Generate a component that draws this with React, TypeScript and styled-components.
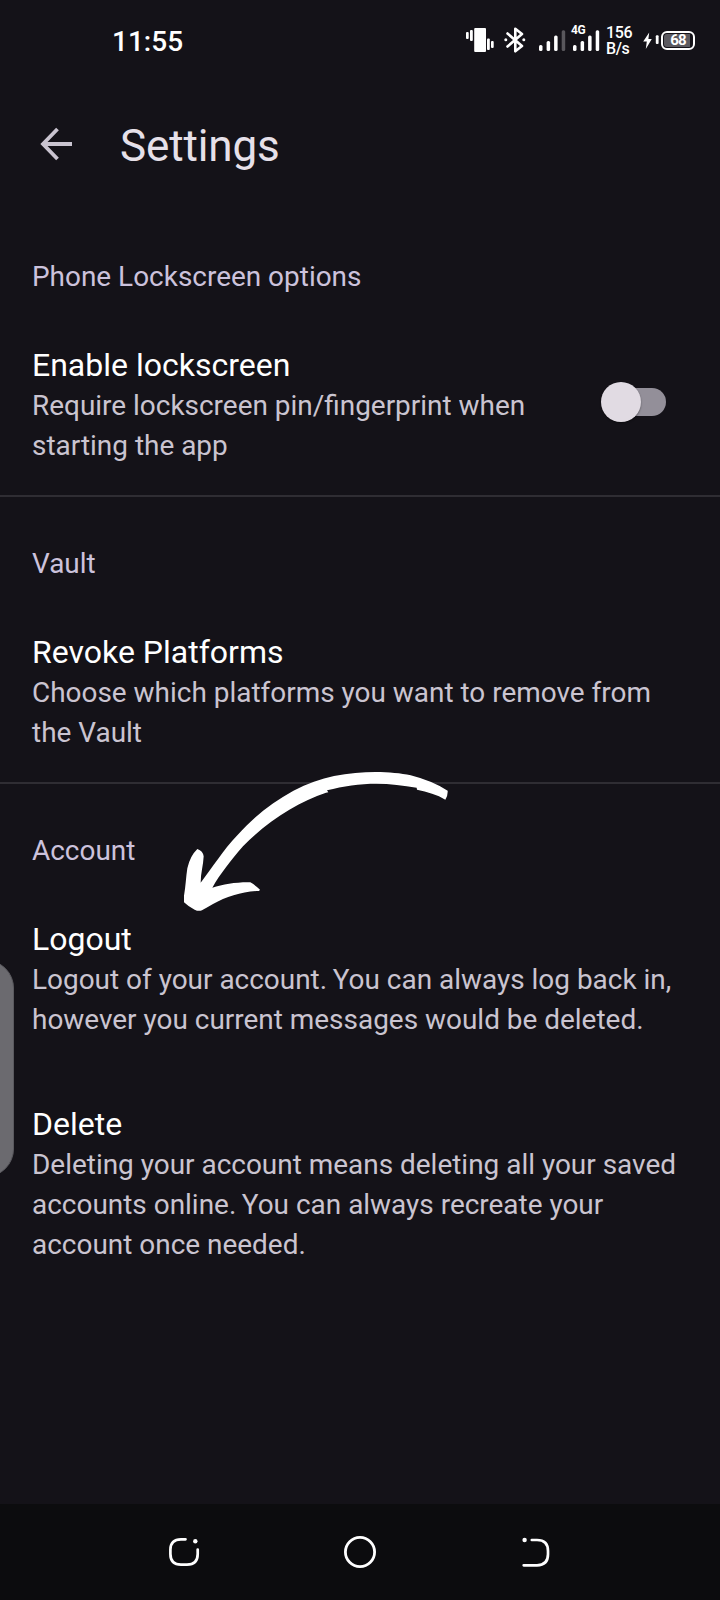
import React from "react";
import styled, { createGlobalStyle } from "styled-components";

const GlobalStyle = createGlobalStyle`
  * { box-sizing: border-box; }
  html, body { margin: 0; padding: 0; background: #141218; }
  body {
    font-family: Roboto, "Liberation Sans", sans-serif;
    text-rendering: optimizeLegibility;
  }
  h1, h2, h3, p { margin: 0; font-weight: 400; }
  svg { flex: none; }
`;

const Screen = styled.div`
  position: relative;
  display: flex;
  flex-direction: column;
  width: 720px;
  height: 1600px;
  overflow: hidden;
  background: #141218;
`;

const StatusBar = styled.header`
  display: flex;
  align-items: center;
  justify-content: space-between;
  height: 80px;
  padding: 0 25px 0 112px;
  color: #fff;
`;

const Clock = styled.span`
  font-size: 28px;
  font-weight: 500;
  line-height: 32px;
  padding-top: 4px;
`;

const StatusIcons = styled.div`
  display: flex;
  align-items: center;
  width: 229px;
  height: 60px;
`;

const NetworkSpeed = styled.div`
  display: flex;
  flex-direction: column;
  width: 37px;
  padding-top: 2px;
  font-size: 16px;
  font-weight: 500;
  line-height: 16px;
  letter-spacing: -0.4px;
`;

const SignalWrap = styled.div`
  position: relative;
  display: flex;
  margin: 0 6px 0 7px;
`;

const SignalLabel = styled.span`
  position: absolute;
  left: -2px;
  top: 13px;
  font-size: 12px;
  line-height: 14px;
  font-weight: 700;
  letter-spacing: -0.4px;
`;

const Battery = styled.div`
  display: flex;
  flex: none;
  align-items: center;
  justify-content: center;
  width: 34px;
  height: 19px;
  border: 2px solid #fff;
  border-radius: 6px;
  background: linear-gradient(90deg, #5c5a60 26px, transparent 26px) content-box;
  padding: 1px;
  font-size: 15px;
  line-height: 15px;
  font-weight: 700;
  letter-spacing: -0.8px;
`;

const AppBar = styled.div`
  display: flex;
  align-items: center;
  height: 130px;
  padding: 0 32px 2px 40px;
`;

const BackButton = styled.button`
  display: flex;
  width: 80px;
  padding: 0;
  border: 0;
  background: none;
`;

const Title = styled.h1`
  font-size: 44px;
  line-height: 56px;
  padding-top: 4px;
  letter-spacing: -0.12px;
  color: #e6e0e9;
`;

const Content = styled.main`
  flex: 1;
`;

const Section = styled.section<{ $divided?: boolean }>`
  padding-top: 47px;
  border-bottom: ${(p) => (p.$divided ? "2px solid #2f2d33" : "0")};
`;

const Category = styled.h2`
  padding: 0 32px;
  font-size: 27.94px;
  line-height: 40px;
  color: #ccc2dc;
`;

const Item = styled.div<{ $gap?: number }>`
  display: flex;
  justify-content: space-between;
  padding: ${(p) => p.$gap ?? 49}px 32px 29px;
`;

const ItemTitle = styled.h3`
  padding-bottom: 1px;
  font-size: 32px;
  line-height: 39px;
  color: #fff;
`;

const Summary = styled.p`
  font-size: 27.94px;
  line-height: 40px;
  color: #cac4d0;
`;

const SentenceStart = styled.span`
  margin-left: -1.4px;
`;

const Switch = styled.button`
  display: flex;
  align-items: center;
  width: 65px;
  height: 40px;
  margin: 36px 22px 0 0;
  padding: 0;
  border: 0;
  background: none;
`;

const Thumb = styled.span`
  z-index: 1;
  flex: none;
  width: 40px;
  height: 40px;
  border-radius: 50%;
  background: #e1dbe3;
  box-shadow: 0 1px 2px rgba(0, 0, 0, 0.4);
`;

const Track = styled.span`
  flex: none;
  width: 49px;
  height: 28px;
  margin-left: -24px;
  border-radius: 14px;
  background: #938f99;
`;

const NavBar = styled.nav`
  display: flex;
  align-items: center;
  justify-content: space-between;
  height: 96px;
  padding: 0 168px;
  background: #0c0c0e;
`;

const EdgeHandle = styled.div`
  position: absolute;
  left: -50px;
  top: 960px;
  width: 64px;
  height: 217px;
  border-radius: 28px;
  border: 1px solid #5a595e;
  background: #6b6a6f;
`;

const PointerArrow = styled.svg`
  position: absolute;
  left: 170px;
  top: 760px;
`;

const VibrateIcon = () => (
  <svg width="38" height="60" fill="#fff">
    <rect x="0" y="22" width="2.7" height="7" rx="1" />
    <rect x="4" y="20" width="2.8" height="11" rx="1" />
    <rect x="8.2" y="18" width="11.8" height="24" rx="1" />
    <rect x="21" y="28.5" width="2.8" height="11.5" rx="1" />
    <rect x="25" y="31" width="2.7" height="7" rx="1" />
  </svg>
);

const BluetoothIcon = () => (
  <svg width="35" height="60" fill="none" stroke="#fff" strokeWidth="2.6">
    <path d="M3.5 23.5 L18 36 L11.3 41.3 V18.7 L18 24 L3.5 36.5" strokeLinejoin="round" strokeLinecap="round" />
    <circle cx="1.8" cy="29.8" r="1.5" fill="#fff" stroke="none" />
    <circle cx="19.8" cy="29.8" r="1.5" fill="#fff" stroke="none" />
  </svg>
);

const SignalBars = ({ dimLast }: { dimLast?: boolean }) => (
  <svg width="27" height="60" fill="#fff">
    <rect x="0" y="35" width="3.5" height="6" rx="1.5" />
    <rect x="7.6" y="31" width="3.5" height="10" rx="1.5" />
    <rect x="15.1" y="25.5" width="3.5" height="15.5" rx="1.5" />
    <rect x="22.7" y="20.3" width="3.5" height="20.7" rx="1.5" fill={dimLast ? "#59575c" : "#fff"} />
  </svg>
);

const BoltIcon = () => (
  <svg width="18" height="60" fill="#fff">
    <path d="M6.2 22.5 L0.2 31.5 H3.8 L2.8 39 L8.8 29 H5.4 Z" />
    <rect x="12.8" y="25.3" width="2.8" height="8.7" rx="1" />
  </svg>
);

const App = () => (
  <>
    <GlobalStyle />
    <Screen>
      <StatusBar>
        <Clock>11:55</Clock>
        <StatusIcons>
          <VibrateIcon />
          <BluetoothIcon />
          <SignalBars dimLast />
          <SignalWrap>
            <SignalBars />
            <SignalLabel>4G</SignalLabel>
          </SignalWrap>
          <NetworkSpeed>
            <span>156</span>
            <span>B/s</span>
          </NetworkSpeed>
          <BoltIcon />
          <Battery>68</Battery>
        </StatusIcons>
      </StatusBar>
      <AppBar>
        <BackButton aria-label="Back">
          <svg width="34" height="34" fill="none" stroke="#cac4d0" strokeWidth="3.8">
            <path d="M17.5 2 L3 17 L17.5 32 M3 17 H32" />
          </svg>
        </BackButton>
        <Title>Settings</Title>
      </AppBar>
      <Content>
        <Section $divided>
          <Category>Phone Lockscreen options</Category>
          <Item>
            <div>
              <ItemTitle>Enable lockscreen</ItemTitle>
              <Summary>
                Require lockscreen pin/fingerprint when
                <br />
                starting the app
              </Summary>
            </div>
            <Switch role="switch" aria-checked={false} aria-label="Enable lockscreen">
              <Thumb />
              <Track />
            </Switch>
          </Item>
        </Section>
        <Section $divided>
          <Category>Vault</Category>
          <Item>
            <div>
              <ItemTitle>Revoke Platforms</ItemTitle>
              <Summary>
                Choose which platforms you want to remove from
                <br />
                the Vault
              </Summary>
            </div>
          </Item>
        </Section>
        <Section>
          <Category>Account</Category>
          <Item>
            <div>
              <ItemTitle>Logout</ItemTitle>
              <Summary>
                Logout of your account. <SentenceStart>You can always log back in,</SentenceStart>
                <br />
                however you current messages would be deleted.
              </Summary>
            </div>
          </Item>
          <Item $gap={36}>
            <div>
              <ItemTitle>Delete</ItemTitle>
              <Summary>
                Deleting your account means deleting all your saved
                <br />
                accounts online. <SentenceStart>You can always recreate your</SentenceStart>
                <br />
                account once needed.
              </Summary>
            </div>
          </Item>
        </Section>
      </Content>
      <NavBar>
        <svg width="32" height="32" fill="none" stroke="#fff" strokeWidth="2.7" strokeLinecap="round">
          <path d="M17.5 3.3 H13 Q2.4 3.3 2.4 13.5 V18 Q2.4 28.7 13 28.7 H19 Q29.7 28.7 29.7 18 V13.5" />
          <circle cx="27.3" cy="5.2" r="2.2" fill="#fff" stroke="none" />
        </svg>
        <svg width="34" height="34" fill="none" stroke="#fff" strokeWidth="2.8">
          <circle cx="17" cy="17" r="14.6" />
        </svg>
        <svg width="32" height="32" fill="none" stroke="#fff" strokeWidth="2.7" strokeLinecap="round">
          <path d="M11.8 4 H17 Q28 4 28 15 V18.3 Q28 29.3 17 29.3 H3.7" />
          <circle cx="4.6" cy="4" r="2.2" fill="#fff" stroke="none" />
        </svg>
      </NavBar>
      <EdgeHandle />
      <PointerArrow width="290" height="160" viewBox="0 0 870 480" fill="#fff">
        <path d="M833 92 Q834 106 826 119 C802 104 772 95 741 89 L740 83 C700 76 660 71 620 71 C568 71 520 78 471 91 L475 97 L468 98 C385 125 290 185 219 259 C184 299 150 343 127 383 C160 373 200 366 241 367 Q258 377 270 389 L267 393 C218 394 170 410 129 432 Q110 443 96 451 Q86 455 74 449 Q55 440 42 427 V407 C47 380 48 350 52 325 Q60 288 82 267 Q99 273 101 289 C100 315 92 340 92 368 C130 320 158 272 202 226 C285 132 395 67 492 48 C580 31 665 34 722 46 Q785 62 833 92 Z" />
      </PointerArrow>
    </Screen>
  </>
);

export default App;
